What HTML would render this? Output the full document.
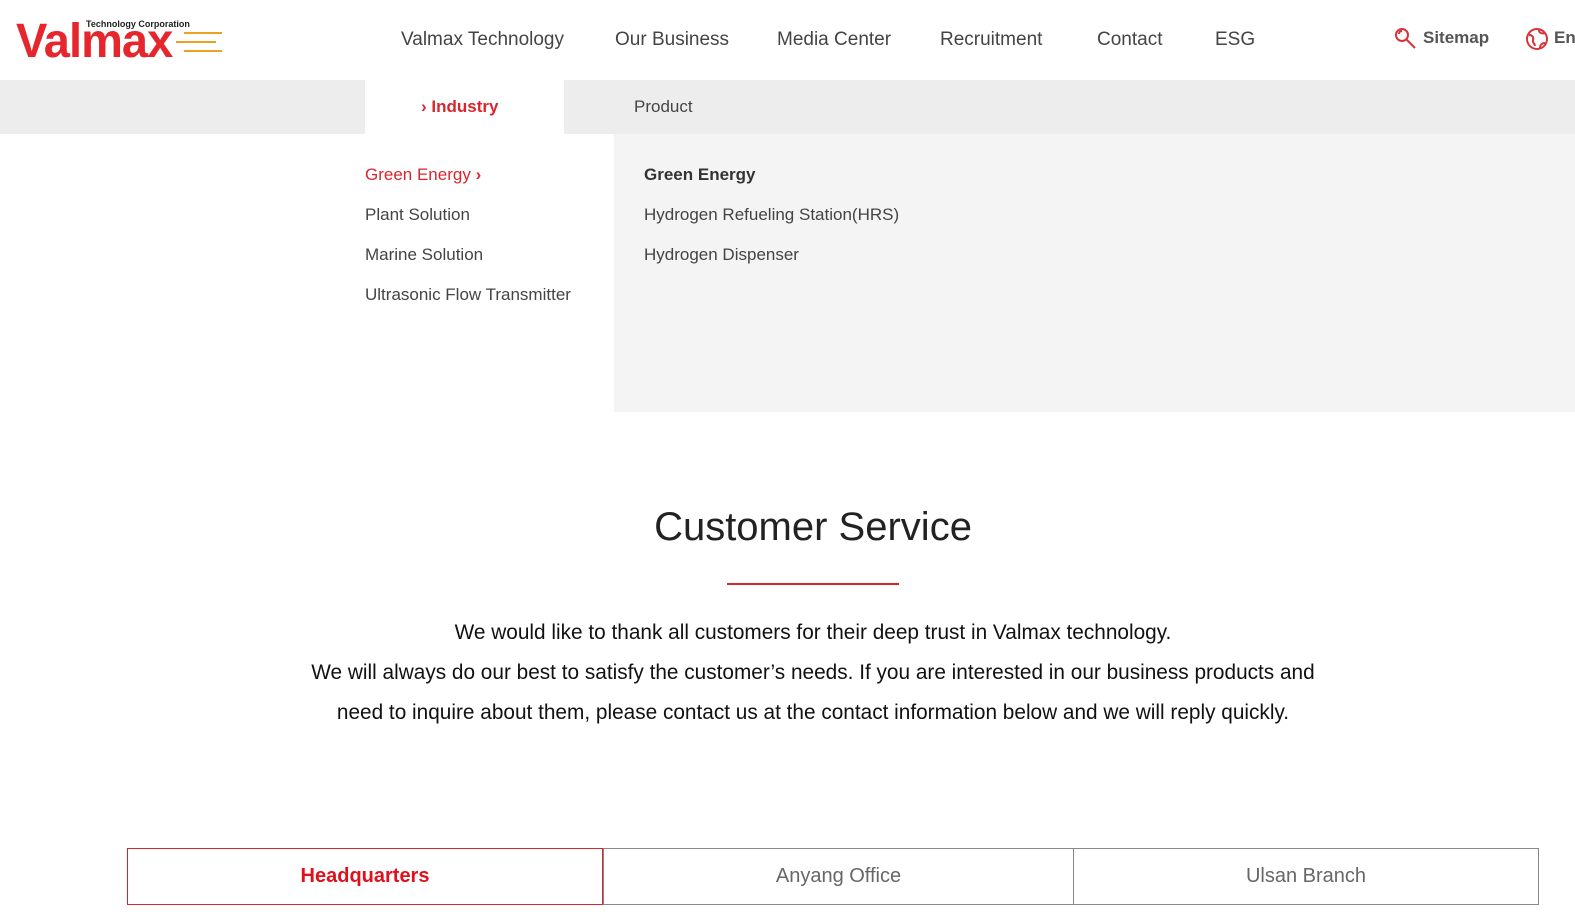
<!DOCTYPE html>
<html><head><meta charset="utf-8"><style>
*{margin:0;padding:0;box-sizing:border-box}
body{width:1575px;height:916px;overflow:hidden;background:#fff;font-family:"Liberation Sans",sans-serif;color:#333;position:relative}
.a{position:absolute;white-space:nowrap}
.nav{font-size:19px;color:#444;top:29px}
</style></head><body>
<div class="a" style="left:16px;top:14px;width:210px;height:50px">
<div class="a" style="left:0;top:4px;font:bold 48px/48px 'Liberation Sans',sans-serif;color:#e5262c;letter-spacing:-1px;transform:scaleX(0.98);transform-origin:left">Valmax</div>
<div class="a" style="left:70px;top:5px;font:bold 9px 'Liberation Sans',sans-serif;color:#222">Technology Corporation</div>
<div class="a" style="left:168px;top:18px;width:38px;height:2px;background:#f0a020"></div>
<div class="a" style="left:160px;top:27px;width:40px;height:2px;background:#f0a020"></div>
<div class="a" style="left:168px;top:36px;width:38px;height:2px;background:#f0a020"></div>
</div>
<div class="a nav" style="left:401px">Valmax Technology</div>
<div class="a nav" style="left:615px">Our Business</div>
<div class="a nav" style="left:777px">Media Center</div>
<div class="a nav" style="left:940px">Recruitment</div>
<div class="a nav" style="left:1097px">Contact</div>
<div class="a nav" style="left:1215px">ESG</div>
<svg class="a" style="left:1394px;top:27px" width="24" height="24" viewBox="0 0 24 24" fill="none" stroke="#d9333a" stroke-width="2"><circle cx="8" cy="8" r="6"/><path d="M12 12l9 9M5 7a3 3 0 0 1 3-3"/></svg>
<div class="a" style="left:1423px;top:28px;font-size:17px;color:#555;font-weight:bold">Sitemap</div>
<svg class="a" style="left:1525px;top:27px" width="24" height="24" viewBox="0 0 24 24" fill="none" stroke="#d9333a" stroke-width="2"><circle cx="12" cy="12" r="10"/><path d="M4 8c3 0 5 2 4 5s2 3 2 6M14 3c0 3 3 4 6 3M15 21c0-3 2-5 5-5"/></svg>
<div class="a" style="left:1554px;top:28px;font-size:17px;color:#555;font-weight:bold">En</div>
<div class="a" style="left:0;top:80px;width:1575px;height:54px;background:#ededed"></div>
<div class="a" style="left:365px;top:80px;width:199px;height:54px;background:#fff"></div>
<div class="a" style="left:421px;top:97px;font-size:17px;color:#d9262d;font-weight:bold">› Industry</div>
<div class="a" style="left:634px;top:97px;font-size:17px;color:#444">Product</div>
<div class="a" style="left:614px;top:134px;width:961px;height:278px;background:#f4f4f4"></div>
<div class="a" style="left:365px;top:165px;font-size:17px;color:#d9262d">Green Energy <b>›</b></div>
<div class="a" style="left:365px;top:205px;font-size:17px;color:#444">Plant Solution</div>
<div class="a" style="left:365px;top:245px;font-size:17px;color:#444">Marine Solution</div>
<div class="a" style="left:365px;top:285px;font-size:17px;color:#444">Ultrasonic Flow Transmitter</div>
<div class="a" style="left:644px;top:165px;font-size:17px;color:#333;font-weight:bold">Green Energy</div>
<div class="a" style="left:644px;top:205px;font-size:17px;color:#444">Hydrogen Refueling Station(HRS)</div>
<div class="a" style="left:644px;top:245px;font-size:17px;color:#444">Hydrogen Dispenser</div>
<div class="a" style="left:0;width:1626px;top:505px;text-align:center;font-size:40px;color:#222">Customer Service</div>
<div class="a" style="left:727px;top:583px;width:172px;height:2px;background:#d9262d"></div>
<div class="a" style="left:0;width:1626px;top:613px;text-align:center;font-size:20.8px;line-height:40px;color:#111">We would like to thank all customers for their deep trust in Valmax technology.<br>We will always do our best to satisfy the customer’s needs. If you are interested in our business products and<br>need to inquire about them, please contact us at the contact information below and we will reply quickly.</div>
<div class="a" style="left:127px;top:848px;width:476px;height:57px;border:1px solid #d9262d;text-align:center;line-height:55px;font-size:20px;color:#e0101c;font-weight:bold">Headquarters</div>
<div class="a" style="left:603px;top:848px;width:471px;height:57px;border:1px solid #888;text-align:center;line-height:55px;font-size:20px;color:#666">Anyang Office</div>
<div class="a" style="left:1073px;top:848px;width:466px;height:57px;border:1px solid #888;text-align:center;line-height:55px;font-size:20px;color:#666">Ulsan Branch</div>
</body></html>
